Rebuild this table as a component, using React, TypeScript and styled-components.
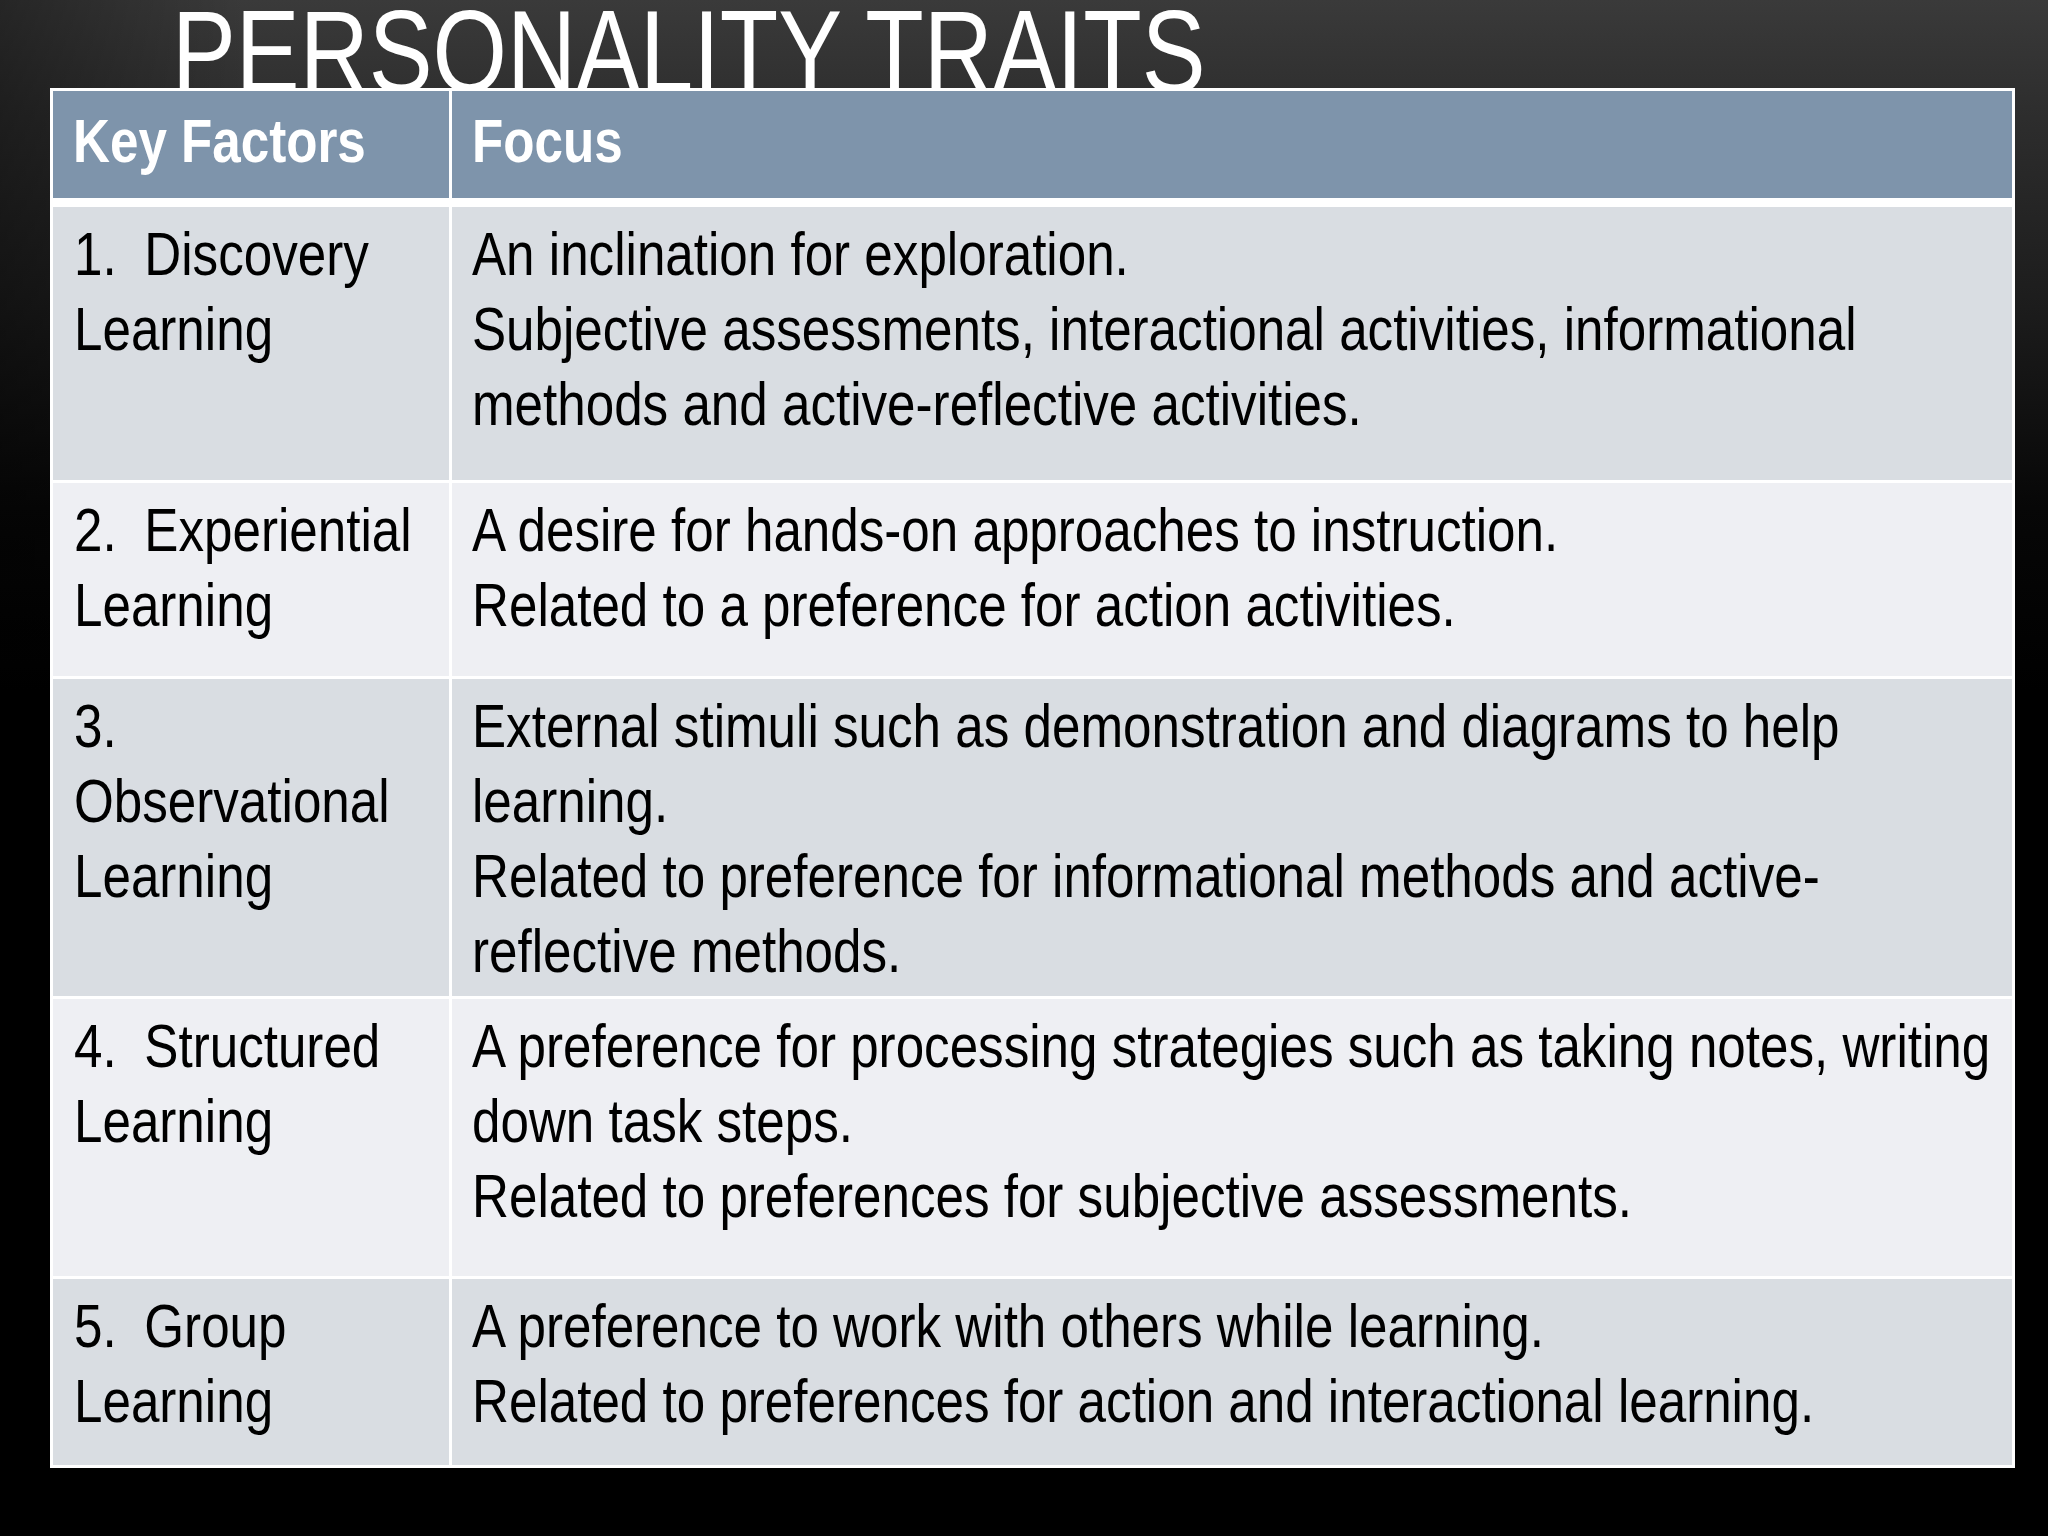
import styled, { createGlobalStyle } from "styled-components";
import { FC } from "react";

const GlobalStyle = createGlobalStyle`
	html, body {
		margin: 0;
		padding: 0;
		background: #000;
	}
	* {
		box-sizing: border-box;
	}
`;

// no Arial Narrow in the sandbox: Liberation Sans squeezed horizontally gives the same shapes
const SQUEEZE = 0.825;

const Slide = styled.div`
	display: flex;
	flex-direction: column;
	width: 2048px;
	height: 1536px;
	overflow: hidden;
	padding: 0 33px 0 50px;

	background:
		linear-gradient(90deg, rgba(0, 0, 0, 0.35) 0%, rgba(0, 0, 0, 0) 12%),
		linear-gradient(180deg, #3a3a3a 0%, #2e2e2e 7%, #1c1c1c 20%, #070707 33%, #000 45%);
	font-family: "Liberation Sans", Arial, sans-serif;
`;

const Title = styled.h1`
	align-self: flex-start;
	margin: -6px 0 -22px 122px;
	transform: scaleX(${SQUEEZE});
	transform-origin: 0 0;

	font-family: "Liberation Sans", Arial, sans-serif;
	font-size: 116px;
	font-weight: 400;
	line-height: 116px;
	color: #fff;
	text-transform: uppercase;
	white-space: nowrap;
`;

const Table = styled.div`
	position: relative;
	display: flex;
	flex-direction: column;
	row-gap: 3px;

	padding: 3px;
	background: #fff;
`;

const Row = styled.div<{ $height: number; $header?: boolean }>`
	display: grid;
	grid-template-columns: 396px 1fr;
	column-gap: 3px;
	height: ${p => p.$height}px;
	margin-bottom: ${p => (p.$header ? 6 : 0)}px;
`;

const HeadCell = styled.div`
	padding: 12px 10px 0 20px;
	background: #7e94ab;
	color: #fff;

	font-size: 62px;
	font-weight: 700;
	line-height: 75px;
`;

const Cell = styled.div<{ $tone: "dark" | "light"; $wide?: boolean }>`
	padding: 9px ${p => (p.$wide ? 14 : 10)}px 0 ${p => (p.$wide ? 20 : 21)}px;
	background: ${p => (p.$tone === "dark" ? "#d9dde2" : "#eeeff3")};
	color: #000;

	font-size: 62px;
	line-height: 75px;
`;

const Narrow = styled.div`
	width: calc(100% / ${SQUEEZE});
	transform: scaleX(${SQUEEZE});
	transform-origin: 0 0;
`;

const Num = styled.span`
	display: inline-block;
	width: 68px;
`;

const Line = styled.p`
	margin: 0;
`;

type FactorType = {
	num: string,
	name: string,
	height: number,
	focus: string[]
}

const factors: FactorType[] = [
	{
		num: "1.",
		name: "Discovery Learning",
		height: 273,
		focus: [
			"An inclination for exploration.",
			"Subjective assessments, interactional activities, informational methods and active-reflective activities."
		]
	},
	{
		num: "2.",
		name: "Experiential Learning",
		height: 193,
		focus: [
			"A desire for hands-on approaches to instruction.",
			"Related to a preference for action activities."
		]
	},
	{
		num: "3.",
		name: "Observational Learning",
		height: 317,
		focus: [
			"External stimuli such as demonstration and diagrams to help learning.",
			"Related to preference for informational methods and active-reflective methods."
		]
	},
	{
		num: "4.",
		name: "Structured Learning",
		height: 277,
		focus: [
			"A preference for processing strategies such as taking notes, writing down task steps.",
			"Related to preferences for subjective assessments."
		]
	},
	{
		num: "5.",
		name: "Group Learning",
		height: 186,
		focus: [
			"A preference to work with others while learning.",
			"Related to preferences for action and interactional learning."
		]
	}
];

const App: FC = () => {
	return (
		<>
			<GlobalStyle />
			<Slide>
				<Title>Personality Traits</Title>
				<Table>
					<Row $height={107} $header>
						<HeadCell><Narrow>Key Factors</Narrow></HeadCell>
						<HeadCell><Narrow>Focus</Narrow></HeadCell>
					</Row>
					{factors.map((f, i) => {
						const tone = i % 2 === 0 ? "dark" : "light";
						return (
							<Row key={f.num} $height={f.height}>
								<Cell $tone={tone}>
									<Narrow>
										<Num>{f.num}</Num> {f.name}
									</Narrow>
								</Cell>
								<Cell $tone={tone} $wide>
									<Narrow>
										{f.focus.map(line => <Line key={line}>{line}</Line>)}
									</Narrow>
								</Cell>
							</Row>
						);
					})}
				</Table>
			</Slide>
		</>
	);
}

export default App;
